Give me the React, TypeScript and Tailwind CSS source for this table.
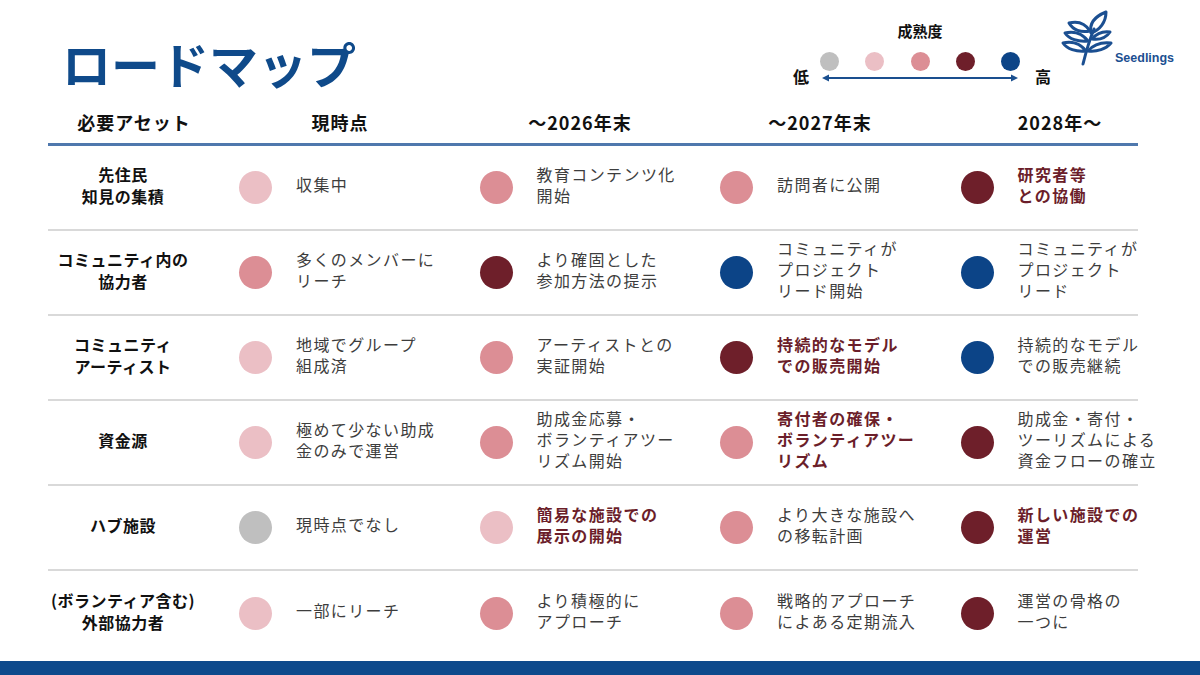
const LEVEL = [
  "bg-[#bfbfbf]",
  "bg-[#ebbfc5]",
  "bg-[#dc8e95]",
  "bg-[#6e1f2a]",
  "bg-[#0c4487]",
];

type Cell = { level: number; text: string; strong?: boolean };
type Row = { label: string; cells: Cell[] };

const rows: Row[] = [
  {
    label: "先住民\n知見の集積",
    cells: [
      { level: 1, text: "収集中" },
      { level: 2, text: "教育コンテンツ化\n開始" },
      { level: 2, text: "訪問者に公開" },
      { level: 3, text: "研究者等\nとの協働", strong: true },
    ],
  },
  {
    label: "コミュニティ内の\n協力者",
    cells: [
      { level: 2, text: "多くのメンバーに\nリーチ" },
      { level: 3, text: "より確固とした\n参加方法の提示" },
      { level: 4, text: "コミュニティが\nプロジェクト\nリード開始" },
      { level: 4, text: "コミュニティが\nプロジェクト\nリード" },
    ],
  },
  {
    label: "コミュニティ\nアーティスト",
    cells: [
      { level: 1, text: "地域でグループ\n組成済" },
      { level: 2, text: "アーティストとの\n実証開始" },
      { level: 3, text: "持続的なモデル\nでの販売開始", strong: true },
      { level: 4, text: "持続的なモデル\nでの販売継続" },
    ],
  },
  {
    label: "資金源",
    cells: [
      { level: 1, text: "極めて少ない助成\n金のみで運営" },
      { level: 2, text: "助成金応募・\nボランティアツー\nリズム開始" },
      { level: 2, text: "寄付者の確保・\nボランティアツー\nリズム", strong: true },
      { level: 3, text: "助成金・寄付・\nツーリズムによる\n資金フローの確立" },
    ],
  },
  {
    label: "ハブ施設",
    cells: [
      { level: 0, text: "現時点でなし" },
      { level: 1, text: "簡易な施設での\n展示の開始", strong: true },
      { level: 2, text: "より大きな施設へ\nの移転計画" },
      { level: 3, text: "新しい施設での\n運営", strong: true },
    ],
  },
  {
    label: "(ボランティア含む)\n外部協力者",
    cells: [
      { level: 1, text: "一部にリーチ" },
      { level: 2, text: "より積極的に\nアプローチ" },
      { level: 2, text: "戦略的アプローチ\nによある定期流入" },
      { level: 3, text: "運営の骨格の\n一つに" },
    ],
  },
];

const headers = ["現時点", "～2026年末", "～2027年末", "2028年～"];

function Logo() {
  return (
    <div className="relative w-[115px] h-[70px] mt-[8px]">
      <svg
        viewBox="0 0 60 58"
        className="absolute -left-[1px] top-0 w-[60px] h-[58px]"
        fill="none"
        stroke="#1b4f91"
        strokeWidth="3"
        strokeLinejoin="round"
        strokeLinecap="round"
      >
        <path d="M24 56 C27 44 30 33 35 21" />
        <path d="M32 25 C30 15 37 8 47 4 C47 14 41 22 32 25 Z" />
        <path d="M31 23 C26 15 18 13 10 15 C14 22 22 25 31 23 Z" />
        <path d="M29 33 C23 25 14 23 6 25 C10 31 19 34 29 33 Z" />
        <path d="M27 43 C21 35 12 33 4 35 C8 41 17 44 27 43 Z" />
        <path d="M33 31 C38 25 44 23 51 24 C47 30 40 32 33 31 Z" />
        <path d="M29 43 C35 36 43 34 52 35 C47 41 38 44 29 43 Z" />
      </svg>
      <span className="absolute left-[55px] top-[41px] font-[family-name:'Liberation_Sans',Arial,sans-serif] font-bold text-[12.5px] text-[#1b4f91]">
        Seedlings
      </span>
    </div>
  );
}

function Legend() {
  return (
    <div className="flex items-start">
      <span className="mt-[67px] w-[16px] text-[16px] leading-[18px] font-bold text-[#111]">低</span>
      <div className="ml-[11px] w-[200px] flex flex-col">
        <div className="mt-[22px] text-center text-[15px] leading-[18px] font-bold text-[#111]">成熟度</div>
        <div className="mt-[12px] flex justify-between">
          {LEVEL.map((c) => (
            <span key={c} className={`w-[19px] h-[19px] rounded-full ${c}`} />
          ))}
        </div>
        <svg viewBox="0 0 200 10" className="mt-[2px] w-[200px] h-[10px]">
          <line x1="5" y1="5" x2="195" y2="5" stroke="#1a4f8f" strokeWidth="2" />
          <path d="M2 5 L9 1.5 L9 8.5 Z" fill="#1a4f8f" />
          <path d="M198 5 L191 1.5 L191 8.5 Z" fill="#1a4f8f" />
        </svg>
      </div>
      <span className="mt-[67px] ml-[15px] w-[16px] text-[16px] leading-[18px] font-bold text-[#111]">高</span>
      <div className="ml-[9px]">
        <Logo />
      </div>
    </div>
  );
}

function DataCell({ cell }: { cell: Cell }) {
  return (
    <div className="w-[240.5px] shrink-0 flex items-center pl-[41px] gap-[24px]">
      <span className={`w-[33px] h-[33px] rounded-full shrink-0 ${LEVEL[cell.level]}`} />
      <p
        className={`pb-[6px] whitespace-pre-line text-[16px] leading-[21px] tracking-[1.4px] ${
          cell.strong ? "font-bold text-[#6b1e2a]" : "text-[#3d3d3d]"
        }`}
      >
        {cell.text}
      </p>
    </div>
  );
}

export default function App() {
  return (
    <div className="w-[1200px] h-[675px] bg-white overflow-hidden flex flex-col font-[family-name:'Noto_Sans_CJK_JP','Noto_Sans',sans-serif]">
      <div className="h-[104px] flex pr-[25px]">
        <h1 className="pl-[62px] pt-[39px] text-[49px] leading-[48px] font-bold text-[#0f4a8a]">ロードマップ</h1>
        <div className="ml-auto">
          <Legend />
        </div>
      </div>

      <div className="ml-[48px]">
        <div className="h-[39px] grid grid-cols-[172px_repeat(4,240px)] items-center pb-[2px] text-[18px] font-bold tracking-[1px] text-[#111] text-center">
          <span>必要アセット</span>
          {headers.map((h) => (
            <span key={h}>{h}</span>
          ))}
        </div>
        <div className="w-[1090px] h-[3px] bg-[#4f78ad]" />

        {rows.map((row, i) => (
          <div
            key={row.label}
            className={`w-[1090px] h-[85px] flex items-center ${
              i < rows.length - 1 ? "border-b-2 border-[#d9d9d9]" : ""
            }`}
          >
            <div className="w-[150px] shrink-0 pb-[6px] text-center whitespace-pre-line text-[16px] leading-[22px] font-bold tracking-[0.5px] text-[#111]">
              {row.label}
            </div>
            {row.cells.map((c, j) => (
              <DataCell key={j} cell={c} />
            ))}
          </div>
        ))}
      </div>

      <div className="mt-auto h-[14px] bg-[#0e4a8c]" />
    </div>
  );
}
